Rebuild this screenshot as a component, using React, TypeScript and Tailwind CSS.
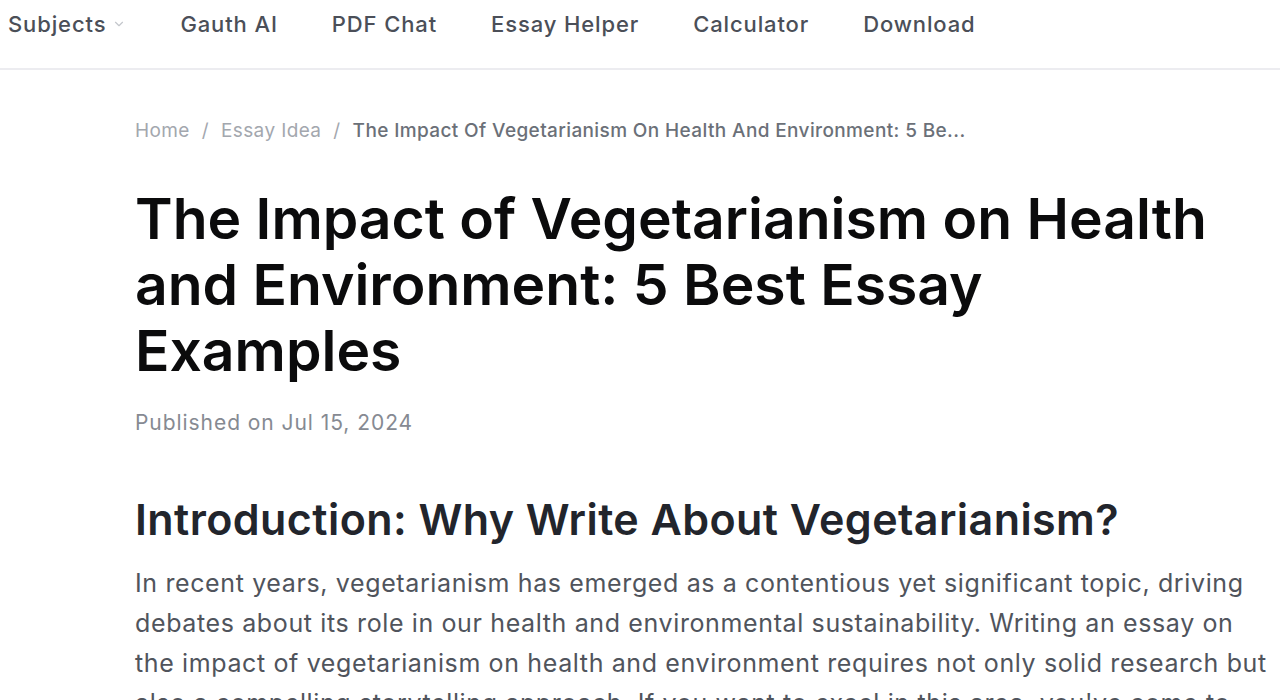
import React from 'react';
import { ChevronDown } from 'lucide-react';

const navLinks = ['Gauth AI', 'PDF Chat', 'Essay Helper', 'Calculator', 'Download'];

const App: React.FC = () => {
  return (
    <div className="min-h-screen bg-white font-['Inter','Liberation_Sans',sans-serif] overflow-hidden">
      {/* Top nav */}
      <header className="h-[70px] border-b-2 border-[#ececf0] flex items-center pl-2">
        <nav className="flex items-center gap-[54px] -mt-[20px] text-[22px] font-medium text-[#4b4f58] tracking-[0.04em]">
          <span className="flex items-center gap-1.5">
            Subjects
            <ChevronDown size={14} className="text-[#c4c7cc]" />
          </span>
          {navLinks.map((link) => (
            <a key={link} href="#">
              {link}
            </a>
          ))}
        </nav>
      </header>

      <main className="pl-[135px] pr-[5px]">
        {/* Breadcrumb */}
        <div className="flex items-center gap-2 pt-[47px] text-[19px] text-[#a3a7ae] tracking-[0.02em]">
          <span>Home</span>
          <span className="px-1">/</span>
          <span>Essay Idea</span>
          <span className="px-1">/</span>
          <span className="font-medium text-[#6b7078]">The Impact Of Vegetarianism On Health And Environment: 5 Be...</span>
        </div>

        <h1 className="mt-[40px] max-w-[1100px] text-[57px] leading-[66px] font-semibold text-[#0b0b0c]">
          The Impact of Vegetarianism on Health and Environment: 5 Best Essay Examples
        </h1>

        <p className="mt-[23px] text-[21px] text-[#868a92] tracking-[0.045em]">Published on Jul 15, 2024</p>

        <h2 className="mt-[55px] text-[43px] leading-[52px] font-semibold text-[#22252c] tracking-[0.01em]">
          Introduction: Why Write About Vegetarianism?
        </h2>

        <p className="mt-[18px] text-[25px] leading-[40px] text-[#50545c] tracking-[0.025em]">
          In recent years, vegetarianism has emerged as a contentious yet significant topic, driving debates about its role in our health and environmental sustainability. Writing an essay on the impact of vegetarianism on health and environment requires not only solid research but also a compelling storytelling approach. If you want to excel in this area, you've come to the right place.
        </p>
      </main>
    </div>
  );
};

export default App;
